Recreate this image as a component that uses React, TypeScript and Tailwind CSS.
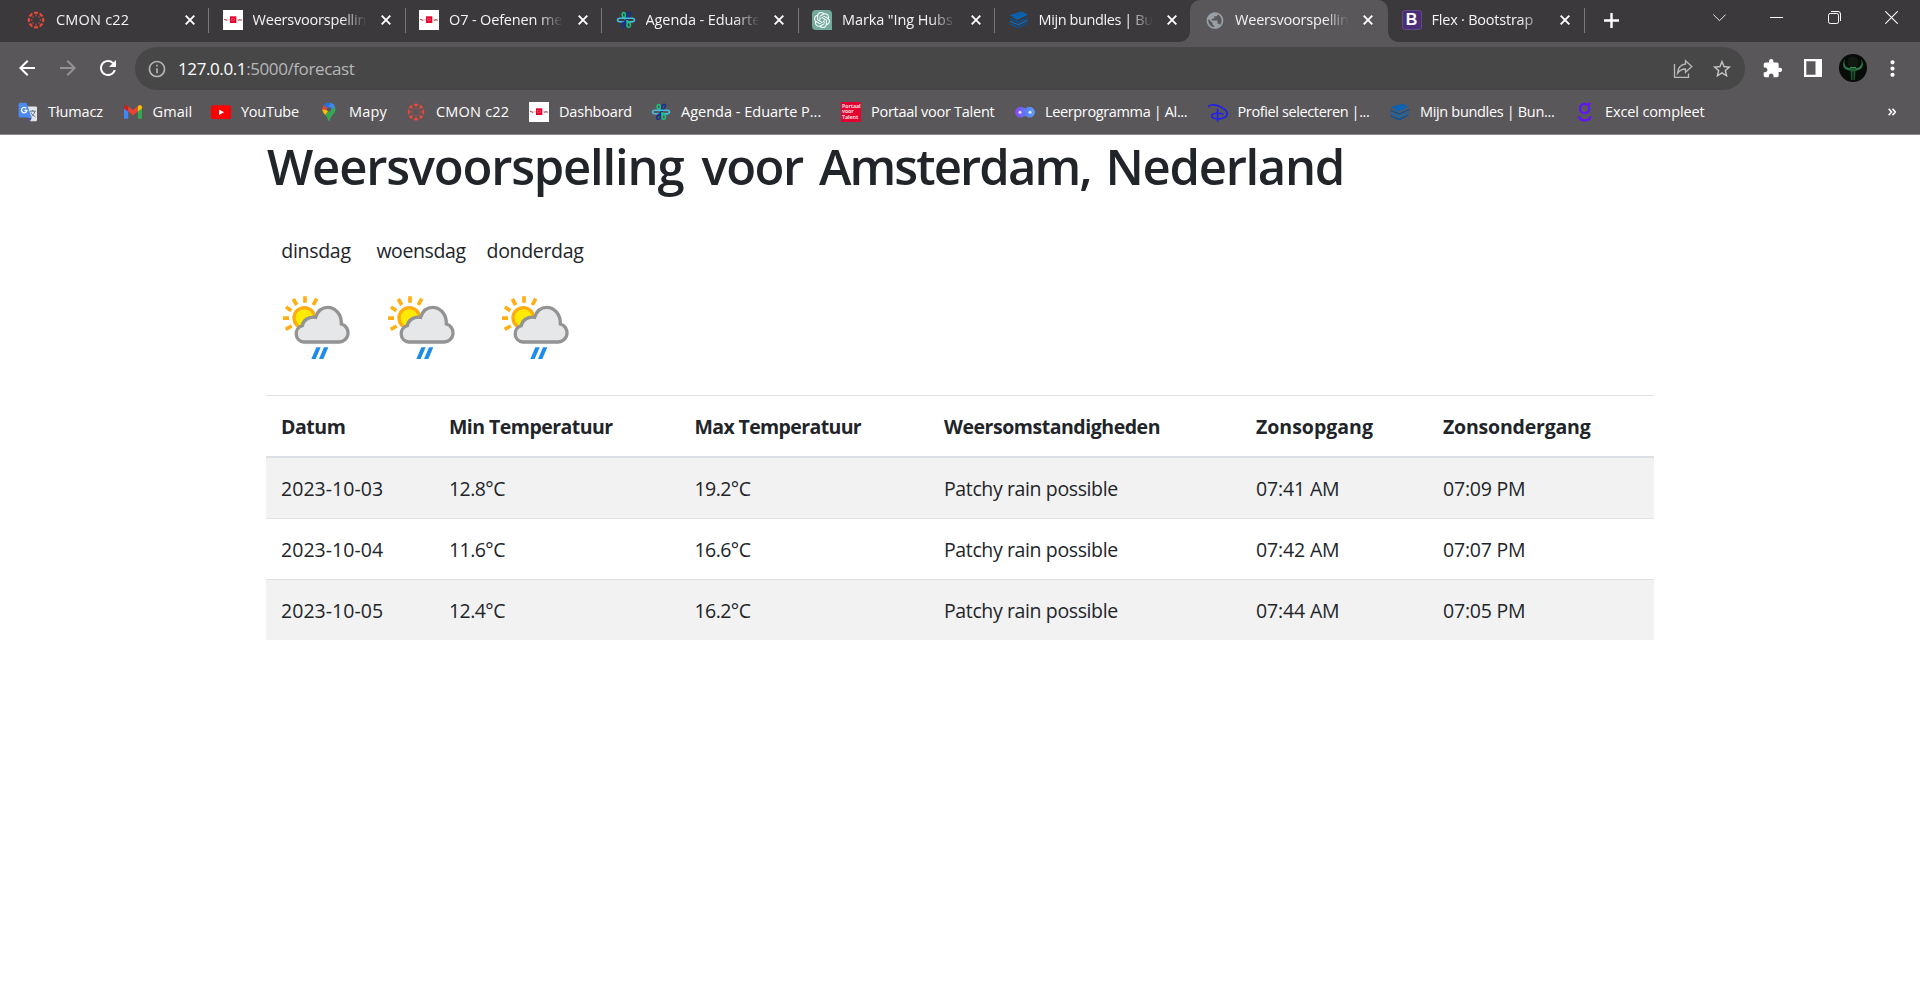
import type { ReactNode } from "react";
import { MdArrowBack, MdArrowForward, MdExtension, MdInfoOutline, MdMoreVert, MdPublic, MdRefresh, MdStarBorder } from "react-icons/md";
import { SiOpenai } from "react-icons/si";

const SPOKES = [0, 45, 90, 135, 180, 225, 270, 315];

function CanvasLogo() {
  return (
    <svg viewBox="0 0 20 20" className="size-5" fill="#e4483a">
      {SPOKES.map((a) => (
        <g key={a} transform={`rotate(${a} 10 10)`}>
          <path d="M7.6 2.1Q10 1.1 12.4 2.1Q12 4.3 10 4.4Q8 4.3 7.6 2.1Z" />
          <circle cx="10" cy="5.8" r=".7" />
        </g>
      ))}
    </svg>
  );
}

function CollegeLogo() {
  return (
    <svg viewBox="0 0 20 20" className="size-5">
      <rect width="20" height="20" fill="#fff" />
      <rect x="7" y="6.300" width="6.300" height="6.700" fill="#e4032e" />
      <rect x="8.600" y="8.800" width="3" height="1.800" fill="none" stroke="#f4798f" strokeWidth=".5" />
      <path d="M1 9.400L2.600 9.800L4.200 10.600M15 10.500L16.600 9.700L19 10.300" fill="none" stroke="#b5564f" strokeWidth="1.100" />
      <path d="M4.500 9.800H7M13.200 9.800H15.500" stroke="#f3a0ae" strokeWidth=".8" />
    </svg>
  );
}

function EduarteLogo() {
  return (
    <svg viewBox="0 0 20 20" className="size-5" fill="none" strokeWidth="1.600" strokeLinecap="round">
      <path d="M9.300 9.300C7 7.500 5.500 5 6.400 3.300C7.500 1.700 9.600 2.700 9.400 4.800C9.400 6 9 7 8.200 8" stroke="#19c37a" />
      <path d="M10.800 10V4.600C11.200 1.900 14.400 1.700 14.600 4C14.600 5.600 13.200 6.800 11.500 8.300" stroke="#17308f" />
      <path d="M12 8.200H16.300C19.200 8.500 19.200 11.600 16.300 11.900H7.500M11.500 8.200H3.800C.8 8.500 .8 11.500 3.800 11.800H6" stroke="#45bde0" />
      <path d="M9.400 10V15.300C9.200 17.900 6 18.200 5.700 15.900C5.600 14.300 7 13.200 8.600 12" stroke="#17308f" />
      <path d="M11 10.800C13.700 12.500 15 14.500 14.200 16.300C13.200 18 10.800 17.400 10.900 15C10.900 14 11.500 13 12 12.500" stroke="#19c37a" />
    </svg>
  );
}

function ChatLogo() {
  return (
    <span className="flex size-5 items-center justify-center rounded-tl-[4px] rounded-tr-[4px] rounded-bl-[4px] bg-[#74aa9c]">
      <SiOpenai className="size-4 text-white" />
    </span>
  );
}

function LayersLogo() {
  return (
    <svg viewBox="0 0 20 20" className="size-5">
      <path d="M.5 5.200L12.500 1.500L16 2.900L4.500 7Z" fill="#0a5fae" />
      <path d="M3.500 7.300L15.500 3.300L19 4.800L8.500 9.800Z" fill="#0a64b6" />
      <path d="M.8 7.800L9.300 11.200L19.500 6.700V7.900L9.300 12.700L.8 9.200Z" fill="#0a5296" />
      <path d="M.8 10.500L9.300 14L18.500 9.600V10.900L9.300 15.400L.8 12Z" fill="#0d69b8" />
      <path d="M.8 13.200L9.300 16.800L18.500 12.300V13.600L9.300 18.400L.8 14.700Z" fill="#0a5296" />
    </svg>
  );
}

function BootstrapLogo() {
  return (
    <span className="flex size-5 items-center justify-center rounded-[3px] border border-[#5f4a85] bg-[#4b2e77] font-['Liberation_Sans',sans-serif] text-[16px] leading-none font-bold text-white">
      B
    </span>
  );
}

function TranslateLogo() {
  return (
    <svg viewBox="0 0 20 20" className="size-5">
      <path d="M8 4.500H17.800A1.200 1.200 0 0 1 19 5.700V18A1.200 1.200 0 0 1 17.800 19.200H12Z" fill="#e1e4e8" />
      <path d="M9.500 15.500H14L12 19.300Z" fill="#3a57b8" />
      <path d="M2.200 .8H8.500L13.500 15.500H2.200A1.500 1.500 0 0 1 .7 14V2.300A1.500 1.500 0 0 1 2.200 .8Z" fill="#4c8bf5" />
      <path d="M8.200 6.300A2.700 2.700 0 1 0 8.900 8.500H6.500" fill="none" stroke="#fff" strokeWidth="1.300" />
      <path d="M12 9.200H17.800M14.800 8V9.200M16.800 9.500C16.300 12 14.500 13.600 13.600 14.200M13 10.500C13.800 12.500 15.800 14 17.300 14.800" fill="none" stroke="#66737d" strokeWidth="1" />
    </svg>
  );
}

function GmailLogo() {
  return (
    <svg viewBox="0 0 20 20" className="size-5">
      <path d="M1 5V15.500A1 1 0 0 0 2 16.700H5.200V8.500Z" fill="#4285f4" />
      <path d="M19 5V15.500A1 1 0 0 1 18 16.700H14.800V8.500Z" fill="#34a853" />
      <path d="M1 6.500V5C1 3.200 3 2.700 4.300 3.600L5.200 4.300V9.600Z" fill="#c5221f" />
      <path d="M5.200 4.300L10 7.900L14.800 4.300V9.600L10 13.200L5.200 9.600Z" fill="#ea4335" />
      <path d="M19 6.500V5C19 3.200 17 2.700 15.700 3.600L14.800 4.300V9.600Z" fill="#fbbc04" />
    </svg>
  );
}

function YouTubeLogo() {
  return (
    <svg viewBox="0 0 20 20" className="size-5">
      <rect x="0" y="3.300" width="20" height="13.800" rx="2.600" fill="#f00" />
      <path d="M8 7.400L13 10.200L8 13Z" fill="#fff" />
    </svg>
  );
}

function MapsLogo() {
  return (
    <svg viewBox="0 0 20 20" className="size-5">
      <path d="M10 .8A6.500 6.500 0 0 1 16.500 7.300C16.500 12 11.500 13.500 10.700 18.500Q10 20 9.300 18.500C8.900 16.200 7.500 14.600 6.200 13L15 4Z" fill="#34a853" />
      <path d="M3.500 7.300C3.500 10 4.700 11.400 6.200 13L12.300 5.500L5 4Z" fill="#fbbc04" />
      <path d="M5 3.100A6.500 6.500 0 0 0 3.500 7.600L8 8L8.600 5Z" fill="#ea4335" />
      <path d="M5 3.100A6.500 6.500 0 0 1 12 1.100L8.200 6Z" fill="#1a73e8" />
      <path d="M12 1.100A6.500 6.500 0 0 1 15.800 4.400L11 9.500L8.200 6Z" fill="#4285f4" />
      <circle cx="10" cy="7.300" r="2.300" fill="#5a575a" />
    </svg>
  );
}

function PortaalLogo() {
  return (
    <span className="flex size-5 flex-col justify-center overflow-hidden bg-[#e4032e] pl-px font-['Open_Sans',sans-serif] text-[5.300px] leading-[5.600px] font-bold tracking-[-0.100px] text-[#ffd9df]">
      <span>Portaal</span>
      <span>voor</span>
      <span>Talent</span>
    </span>
  );
}

function DuoLogo() {
  return (
    <svg viewBox="0 0 20 20" className="size-5">
      <defs>
        <linearGradient id="duo">
          <stop offset="0" stopColor="#8b45f7" />
          <stop offset=".5" stopColor="#5f78f5" />
          <stop offset="1" stopColor="#5aa2fb" />
        </linearGradient>
      </defs>
      <path d="M5.500 4.800C8 4.800 8.600 6.300 10 6.300S12.500 4.800 14.500 4.800A5.400 5.400 0 0 1 14.500 15.600C12.500 15.600 11.500 14 10 14S8 15.600 5.500 15.600A5.400 5.400 0 0 1 5.500 4.800Z" fill="url(#duo)" />
      <circle cx="5" cy="10.200" r="1.500" fill="#e9dcff" />
      <circle cx="15" cy="10.200" r="1.500" fill="#e4efff" />
    </svg>
  );
}

function DisneyLogo() {
  return (
    <svg viewBox="0 0 20 20" className="size-5" fill="none" stroke="#2020f0" strokeLinecap="round">
      <path d="M1 4.800C.5 2.600 6 2.200 11 4.200C17 6.700 20 10 19 13C18 16 12 17.500 7 16.500C3.500 15.800 2.500 13.500 5 12.200C8 10.800 13 11.200 15 12.300" strokeWidth="1.600" />
      <path d="M9.600 7.500V19" strokeWidth="1.700" />
    </svg>
  );
}

function SmileLogo() {
  return (
    <svg viewBox="0 0 20 20" className="size-5" fill="none" stroke="#6212ff" strokeWidth="2.300">
      <circle cx="9.600" cy="6.500" r="4.600" />
      <path d="M13.500 2.300L15.300 1M4 14.300C5 19.700 14.500 19.700 15.500 14.300" />
    </svg>
  );
}

type Tab = { icon: ReactNode; label: string; text: string; active?: boolean; divider?: boolean };

const TABS: Tab[] = [
  { icon: <CanvasLogo />, label: "CMON c22", text: "tracking-[0.2px]", divider: true },
  { icon: <CollegeLogo />, label: "Weersvoorspelling", text: "tracking-[-0.2px]", divider: true },
  { icon: <CollegeLogo />, label: "O7 - Oefenen met", text: "tracking-[-0.15px]", divider: true },
  { icon: <EduarteLogo />, label: "Agenda - Eduarte", text: "tracking-[-0.1px]", divider: true },
  { icon: <ChatLogo />, label: 'Marka "Ing Hubs', text: "tracking-[-0.1px]", divider: true },
  { icon: <LayersLogo />, label: "Mijn bundles | Bun", text: "tracking-[-0.4px]" },
  { icon: <MdPublic className="size-[21px] text-[#9aa0a6]" />, label: "Weersvoorspelling", text: "tracking-[-0.2px]", active: true },
  { icon: <BootstrapLogo />, label: "Flex · Bootstrap", text: "tracking-[-0.22px]", divider: true },
];

function CloseGlyph() {
  return (
    <svg viewBox="0 0 10 10" className="size-2.5 shrink-0" stroke="#fff" strokeWidth="1.900">
      <path d="M.7 .7L9.300 9.300M9.300 .7L.7 9.300" />
    </svg>
  );
}

function TabStrip() {
  return (
    <div className="flex h-[42px] bg-[#3c393c] pl-[13px]">
      {TABS.map((t, i) => (
        <div
          key={i}
          className={
            t.active
              ? "relative mr-[1px] -ml-[2px] flex w-[197.500px] shrink-0 items-center rounded-t-[10px] bg-[#5a575a] pr-[15px] pb-[2px] pl-[15px]"
              : "relative flex w-[196.500px] shrink-0 items-center pr-[15px] pb-[2px] pl-[13px]"
          }
        >
          {t.active && (
            <>
              <span className="absolute bottom-0 -left-[10px] size-[10px] bg-[radial-gradient(circle_at_0_0,transparent_9.500px,#5a575a_10px)]" />
              <span className="absolute -right-[10px] bottom-0 size-[10px] bg-[radial-gradient(circle_at_100%_0,transparent_9.500px,#5a575a_10px)]" />
            </>
          )}
          <span className="flex size-5 shrink-0 items-center justify-center">{t.icon}</span>
          <span className="ml-[10px] w-[114px] overflow-hidden [mask-image:linear-gradient(to_right,#000_78%,transparent)] text-[14.500px] leading-5 whitespace-nowrap text-[#f4f4f4]">
            <span className={t.text}>{t.label}</span>
          </span>
          <span className="ml-auto flex">
            <CloseGlyph />
          </span>
          {t.divider && <span className="absolute top-2 right-[0.500px] h-[25px] w-px bg-[#79777a]" />}
        </div>
      ))}
      <svg viewBox="0 0 15 15" className="mt-[12.500px] ml-[18.500px] size-[15px]" stroke="#fff" strokeWidth="2.400">
        <path d="M7.500 0V15M0 7.500H15" />
      </svg>
      <div className="ml-auto flex items-start gap-[44.300px] pt-[11px] pr-[22px]">
        <svg viewBox="0 0 13 13" className="size-[13px]" fill="none" stroke="#e8e8e8">
          <path d="M.3 3.500L6.500 9.700L12.700 3.500" />
        </svg>
        <svg viewBox="0 0 13 13" className="size-[13px]" stroke="#fff">
          <path d="M0 6.500H13" />
        </svg>
        <svg viewBox="0 0 13 13" className="size-[13px]" fill="none" stroke="#fff">
          <rect x=".5" y="2.500" width="10" height="10" rx="1.800" />
          <path d="M3 .5H10A2.500 2.500 0 0 1 12.500 3V10" />
        </svg>
        <svg viewBox="0 0 13 13" className="size-[13px]" stroke="#fff" strokeWidth="1.100">
          <path d="M.3 .3L12.700 12.700M12.700 .3L.3 12.700" />
        </svg>
      </div>
    </div>
  );
}

function Avatar() {
  return (
    <svg viewBox="0 0 28 28" className="size-7">
      <circle cx="14" cy="14" r="14" fill="#080c09" />
      <circle cx="14" cy="8" r="5.500" fill="#101a12" />
      <path d="M6.200 4.500C1.500 11.500 5 17 13.500 16.700H14.500C23 17 26.500 11.500 21.800 4.500C24.300 10.500 21 15 14 14.200C7 15 3.700 10.500 6.200 4.500Z" fill="#2a7546" />
      <path d="M11.300 13.500H16.700L15.800 26H14.600V17.500H13.400V26H12.200Z" fill="#1f5c35" />
      <path d="M11 13.500H17" stroke="#3b8a55" />
    </svg>
  );
}

function Toolbar() {
  return (
    <div className="flex h-[53px] items-start pt-[5px] pl-[15px]">
      <div className="flex h-[43px] items-center gap-[16.500px] pb-px">
        <MdArrowBack className="size-[24px] text-white" />
        <MdArrowForward className="size-[24px] text-[#949295]" />
        <MdRefresh className="size-[24px] text-white" />
      </div>
      <div className="ml-[15px] flex h-[43px] w-[1610px] items-center rounded-full bg-[#474748] pl-3 text-[17px]">
        <MdInfoOutline className="size-[20px] text-[#b4b5b8]" />
        <span className="mt-px ml-[11px] leading-6 tracking-[-0.400px] text-[#b6b7b9]">
          <span className="text-white">127.0.0.1</span>:5000/forecast
        </span>
        <svg viewBox="0 0 20 20" className="ml-auto size-5" fill="none" stroke="#b9babc" strokeWidth="1.300">
          <path d="M1.500 5V18.300H15.500V14.500" />
          <path d="M12.500 1.800L18.800 7.500L12.500 13.200V10C8.500 9.800 6.500 11.500 4.500 14.300C5 9 8 5.500 12.500 5Z" />
        </svg>
        <MdStarBorder className="mr-[12px] ml-[18px] size-[22px] text-[#c3c4c6]" />
      </div>
      <div className="flex h-[43px] items-center pb-px pl-[17px]">
        <MdExtension className="size-[21px] text-white" />
        <svg viewBox="0 0 18 18" className="ml-[20.500px] size-[18px]">
          <path d="M0 0H18V18H0ZM2.300 2.300V15.700H11.500V2.300Z" fill="#fff" fillRule="evenodd" />
        </svg>
        <span className="ml-[17.500px]">
          <Avatar />
        </span>
        <MdMoreVert className="ml-[13px] size-[25px] text-white" />
      </div>
    </div>
  );
}

const BOOKMARKS = [
  { icon: <TranslateLogo />, label: "Tłumacz", box: "w-[104.500px]", text: "tracking-[-0.1px]" },
  { icon: <GmailLogo />, label: "Gmail", box: "w-[88.500px]", text: "tracking-[0.1px]" },
  { icon: <YouTubeLogo />, label: "YouTube", box: "w-[108px]", text: "tracking-[-0.25px]" },
  { icon: <MapsLogo />, label: "Mapy", box: "w-[87px]", text: "tracking-[0.2px]" },
  { icon: <CanvasLogo />, label: "CMON c22", box: "w-[123px]", text: "tracking-[0.2px]" },
  { icon: <CollegeLogo />, label: "Dashboard", box: "w-[122px]", text: "tracking-[-0.2px]" },
  { icon: <EduarteLogo />, label: "Agenda - Eduarte P...", box: "w-[190px]", text: "tracking-[0px]" },
  { icon: <PortaalLogo />, label: "Portaal voor Talent", box: "w-[174px]", text: "tracking-[-0.26px]" },
  { icon: <DuoLogo />, label: "Leerprogramma | Al...", box: "w-[192.500px]", text: "tracking-[-0.36px]" },
  { icon: <DisneyLogo />, label: "Profiel selecteren |...", box: "w-[182.500px]", text: "tracking-[-0.38px]" },
  { icon: <LayersLogo />, label: "Mijn bundles | Bun...", box: "w-[185px]", text: "tracking-[-0.33px]" },
  { icon: <SmileLogo />, label: "Excel compleet", box: "w-[150px]", text: "tracking-[-0.12px]" },
];

function BookmarkBar() {
  return (
    <div className="flex h-[34px] items-center pl-[18px] text-[14.500px] leading-5 text-white">
      {BOOKMARKS.map((b) => (
        <div key={b.label} className={b.box}>
          <div className="flex items-center gap-[10px] whitespace-nowrap">
            {b.icon}
            <span className={b.text}>{b.label}</span>
          </div>
        </div>
      ))}
      <svg viewBox="0 0 8 8" className="mr-[24px] mb-px ml-auto size-2" fill="none" stroke="#fff" strokeWidth="1.600">
        <path d="M.7 .7L3.500 4L.7 7.300M4.500 .7L7.300 4L4.500 7.300" />
      </svg>
    </div>
  );
}

function WeatherIcon() {
  return (
    <svg viewBox="36 0 201 240" className="mx-auto h-20 w-[67px] overflow-visible">
      <path d="M102 34V53M137 41L127 60M67 42L77 60M45 66L61 77M36 99.500H54M44 133L62 123" stroke="#ffae14" strokeWidth="11" />
      <circle cx="100" cy="99" r="31" fill="#ffeb00" stroke="#ffac10" strokeWidth="10" />
      <path
        d="M98 171H205A27.500 27.500 0 0 0 211 117C212 87 192 67 170 67C153 67 140 78 134 97C113 94 97 105 94 122A25 25 0 0 0 98 171Z"
        fill="#e6e7e8"
        stroke="#939393"
        strokeWidth="10"
      />
      <path d="M136 187H149L134 222H121ZM159 187H172L157 222H144Z" fill="#1f8ceb" />
    </svg>
  );
}

const TITLE = [
  { word: "Weersvoorspelling", box: "w-[434.500px] tracking-[-1.200px]" },
  { word: "voor", box: "w-[117.500px] tracking-[-1.500px]" },
  { word: "Amsterdam,", box: "w-[286.500px] tracking-[-1.900px]" },
  { word: "Nederland", box: "tracking-[-1.300px]" },
];

const DAYS = [
  { name: "dinsdag", box: "w-[100px]", text: "tracking-[-0.3px]" },
  { name: "woensdag", box: "w-[110px]", text: "tracking-[-0.4px]" },
  { name: "donderdag", box: "w-[118px]", text: "tracking-[-0.33px]" },
];

const HEADS = [
  { name: "Datum", text: "tracking-[-0.45px]" },
  { name: "Min Temperatuur", text: "tracking-[-0.54px]" },
  { name: "Max Temperatuur", text: "tracking-[-0.62px]" },
  { name: "Weersomstandigheden", text: "tracking-[-0.46px]" },
  { name: "Zonsopgang", text: "tracking-[0px]" },
  { name: "Zonsondergang", text: "tracking-[-0.2px]" },
];

const CELL_TRACKING = ["tracking-[0.05px]", "tracking-[-0.55px]", "tracking-[-0.55px]", "tracking-[-0.38px]", "tracking-[-0.15px]", "tracking-[-0.2px]"];

const ROWS = [
  ["2023-10-03", "12.8°C", "19.2°C", "Patchy rain possible", "07:41 AM", "07:09 PM"],
  ["2023-10-04", "11.6°C", "16.6°C", "Patchy rain possible", "07:42 AM", "07:07 PM"],
  ["2023-10-05", "12.4°C", "16.2°C", "Patchy rain possible", "07:44 AM", "07:05 PM"],
];

const GRID = "grid grid-cols-[168px_245.500px_249.500px_312px_187px_226px]";

export default function App() {
  return (
    <div className="h-[982px] w-[1920px] overflow-hidden bg-white font-['Open_Sans','Noto_Sans',sans-serif]">
      <header>
        <TabStrip />
        <div className="h-[93px] border-b border-[#8b898b] bg-[#5a575a]">
          <Toolbar />
          <BookmarkBar />
        </div>
      </header>
      <main className="mx-auto w-[1388px] pt-px text-[19.500px] leading-[30px] text-[#212529]">
        <h1 className="flex pl-px text-[49px] leading-[60px] font-semibold whitespace-nowrap">
          {TITLE.map((t) => (
            <span key={t.word} className={t.box}>
              {t.word}{" "}
            </span>
          ))}
        </h1>
        <div className="mt-10 flex text-center">
          {DAYS.map((d) => (
            <div key={d.name} className={d.box}>
              <p className={d.text}>{d.name}</p>
              <div className="mt-[19px]">
                <WeatherIcon />
              </div>
            </div>
          ))}
        </div>
        <div className="mt-[30px]">
          <div className={`${GRID} h-[63px] border-t border-b-2 border-t-[#dee2e6] border-b-[#dee2e6] font-bold`}>
            {HEADS.map((h) => (
              <div key={h.name} className="pt-4 pl-[15px]">
                <span className={h.text}>{h.name}</span>
              </div>
            ))}
          </div>
          {ROWS.map((r, i) => (
            <div
              key={r[0]}
              className={`${GRID} ${i === 0 ? "h-[60px]" : "h-[61px] border-t border-[#dee2e6]"} ${i % 2 === 0 ? "bg-[#f2f2f2]" : "bg-white"}`}
            >
              {r.map((c, j) => (
                <div key={j} className="pt-4 pl-[15px]">
                  <span className={CELL_TRACKING[j]}>{c}</span>
                </div>
              ))}
            </div>
          ))}
        </div>
      </main>
    </div>
  );
}
